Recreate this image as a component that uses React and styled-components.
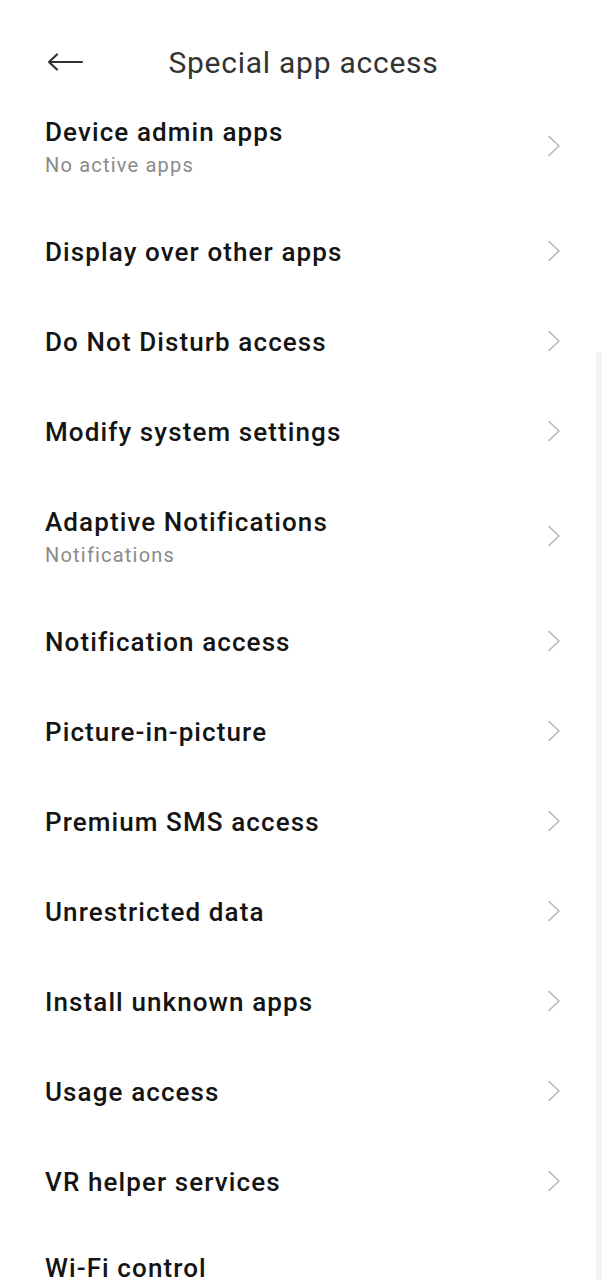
import React from "react";
import styled, { createGlobalStyle } from "styled-components";

const Global = createGlobalStyle`
  html, body { margin: 0; padding: 0; background: #fff; }
  body { font-family: Roboto, "Noto Sans", "Liberation Sans", sans-serif; }
`;

const Page = styled.div`
  position: relative;
  width: 607px;
  height: 1280px;
  overflow: hidden;
  background: #ffffff;
`;

const Header = styled.header`
  display: grid;
  grid-template-columns: 1fr auto 1fr;
  align-items: center;
  height: 50px;
  padding: 37px 0 0;
  box-sizing: content-box;
  margin-bottom: -1px;
`;

const BackButton = styled.div`
  display: flex;
  align-items: center;
  padding-left: 47px;
  color: #333;
`;

const Title = styled.h1`
  margin: 0;
  font-size: 30px;
  font-weight: 400;
  color: #333333;
  letter-spacing: 0.75px;
`;

const List = styled.ul`
  list-style: none;
  margin: 0;
  padding: 0;
`;

const Row = styled.li`
  display: flex;
  align-items: center;
  justify-content: space-between;
  height: ${(p) => (p.$cut ? 130 : p.$tall ? 120 : 90)}px;
  padding: 0 46px 0 45px;
`;

const Texts = styled.div`
  display: flex;
  flex-direction: column;
  gap: 5px;
  align-self: ${(p) => (p.$cut ? "flex-start" : "auto")};
  margin-top: ${(p) => (p.$cut ? 27 : p.$tall ? 2 : 1)}px;
`;

const ItemTitle = styled.span`
  font-size: 26px;
  font-weight: 500;
  color: #141414;
  line-height: 30px;
  letter-spacing: 1.1px;
`;

const ItemSub = styled.span`
  font-size: 20px;
  font-weight: 400;
  color: #8a8a8a;
  line-height: 26px;
  letter-spacing: 1.2px;
`;

const Track = styled.div`
  position: absolute;
  right: 5px;
  top: 352px;
  bottom: 0;
  width: 6px;
  background: #f3f3f3;
`;

const Chevron = () => (
  <svg width="14" height="22" viewBox="0 0 14 22" fill="none">
    <path d="M2 1.5 L12 11 L2 20.5" stroke="#b8b8b8" strokeWidth="1.6" strokeLinecap="round" strokeLinejoin="round" />
  </svg>
);

const BackArrow = () => (
  <svg width="37" height="20" viewBox="0 0 37 20" fill="none">
    <path d="M2 10 H35 M10 2.5 L2 10 L10 17.5" stroke="#333" strokeWidth="2.2" strokeLinecap="round" strokeLinejoin="round" />
  </svg>
);

const items = [
  { title: "Device admin apps", sub: "No active apps" },
  { title: "Display over other apps" },
  { title: "Do Not Disturb access" },
  { title: "Modify system settings" },
  { title: "Adaptive Notifications", sub: "Notifications" },
  { title: "Notification access" },
  { title: "Picture-in-picture" },
  { title: "Premium SMS access" },
  { title: "Unrestricted data" },
  { title: "Install unknown apps" },
  { title: "Usage access" },
  { title: "VR helper services" },
  { title: "Wi-Fi control", cut: true },
];

export default function App() {
  return (
    <Page>
      <Global />
      <Header>
        <BackButton>
          <BackArrow />
        </BackButton>
        <Title>Special app access</Title>
        <div />
      </Header>
      <List>
        {items.map((it) => (
          <Row key={it.title} $tall={!!it.sub} $cut={!!it.cut}>
            <Texts $tall={!!it.sub} $cut={!!it.cut}>
              <ItemTitle>{it.title}</ItemTitle>
              {it.sub && <ItemSub>{it.sub}</ItemSub>}
            </Texts>
            <Chevron />
          </Row>
        ))}
      </List>
      <Track />
    </Page>
  );
}
